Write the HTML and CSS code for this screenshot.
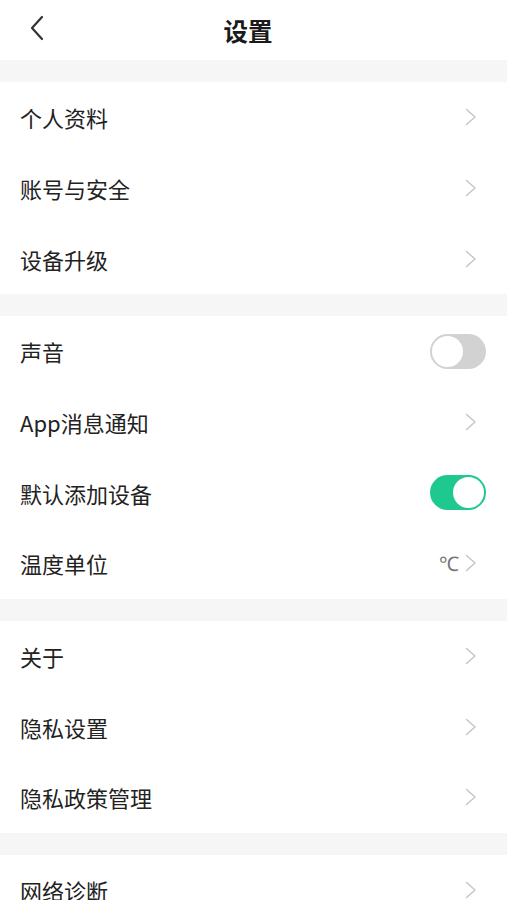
FILE: index.html
```html
<!DOCTYPE html>
<html lang="zh-CN">
<head>
    <meta charset="UTF-8">
    <meta name="viewport" content="width=device-width, initial-scale=1.0">
    <title>设置</title>
    <link rel="stylesheet" href="styles.css">
</head>
<body>
    <header class="topbar">
        <a class="back" href="#">
            <svg width="16" height="26" viewBox="0 0 16 26"><path d="M13 2 L3 13 L13 24" fill="none" stroke="#333" stroke-width="2.2" stroke-linecap="round" stroke-linejoin="round"/></svg>
        </a>
        <h1>设置</h1>
    </header>

    <div class="gap"></div>
    <ul class="group">
        <li class="row"><span>个人资料</span><svg class="chev" viewBox="0 0 12 18"><path d="M1.5 1.5 L10 9 L1.5 16.5"/></svg></li>
        <li class="row"><span>账号与安全</span><svg class="chev" viewBox="0 0 12 18"><path d="M1.5 1.5 L10 9 L1.5 16.5"/></svg></li>
        <li class="row"><span>设备升级</span><svg class="chev" viewBox="0 0 12 18"><path d="M1.5 1.5 L10 9 L1.5 16.5"/></svg></li>
    </ul>

    <div class="gap"></div>
    <ul class="group">
        <li class="row"><span>声音</span><b class="switch"></b></li>
        <li class="row"><span>App消息通知</span><svg class="chev" viewBox="0 0 12 18"><path d="M1.5 1.5 L10 9 L1.5 16.5"/></svg></li>
        <li class="row"><span>默认添加设备</span><b class="switch on"></b></li>
        <li class="row"><span>温度单位</span><em class="value">℃</em><svg class="chev" viewBox="0 0 12 18"><path d="M1.5 1.5 L10 9 L1.5 16.5"/></svg></li>
    </ul>

    <div class="gap"></div>
    <ul class="group">
        <li class="row"><span>关于</span><svg class="chev" viewBox="0 0 12 18"><path d="M1.5 1.5 L10 9 L1.5 16.5"/></svg></li>
        <li class="row"><span>隐私设置</span><svg class="chev" viewBox="0 0 12 18"><path d="M1.5 1.5 L10 9 L1.5 16.5"/></svg></li>
        <li class="row"><span>隐私政策管理</span><svg class="chev" viewBox="0 0 12 18"><path d="M1.5 1.5 L10 9 L1.5 16.5"/></svg></li>
    </ul>

    <div class="gap"></div>
    <ul class="group">
        <li class="row"><span>网络诊断</span><svg class="chev" viewBox="0 0 12 18"><path d="M1.5 1.5 L10 9 L1.5 16.5"/></svg></li>
    </ul>
</body>
</html>
```

FILE: styles.css
```css
body {
    font-family: "Noto Sans CJK SC", "Noto Sans", sans-serif;
    margin: 0;
    padding: 0;
    background: #fff;
    color: #222;
}
.topbar {
    height: 60px;
    display: flex;
    align-items: center;
    justify-content: center;
    padding-right: 11px;
    position: relative;
}
.topbar h1 {
    margin: 0;
    font-size: 24.5px;
    font-weight: 700;
    color: #1a1a1a;
}
.back {
    position: absolute;
    left: 29px;
    top: 15px;
    display: flex;
}
.gap {
    height: 22px;
    background: #f6f6f6;
}
.group {
    list-style: none;
    margin: 0;
    padding: 0;
}
.row {
    height: 70.67px;
    display: flex;
    align-items: center;
    padding: 0 20px 0 20px;
    font-size: 22px;
}
.row span {
    flex: 1;
}
.chev {
    width: 12px;
    height: 18px;
    margin-right: 10px;
    fill: none;
    stroke: #c6c6c6;
    stroke-width: 1.5;
    stroke-linecap: round;
    stroke-linejoin: round;
}
.value {
    font-style: normal;
    font-family: "Noto Sans", sans-serif;
    font-size: 20px;
    color: #777;
    margin-right: 6px;
}
.switch {
    width: 56px;
    height: 35px;
    border-radius: 18px;
    background: #d2d2d2;
    position: relative;
    margin-right: 1px;
}
.switch::after {
    content: "";
    position: absolute;
    left: 2px;
    top: 2px;
    width: 31px;
    height: 31px;
    border-radius: 50%;
    background: #fff;
}
.switch.on {
    background: #1ec88f;
}
.switch.on::after {
    left: 23px;
}
```
